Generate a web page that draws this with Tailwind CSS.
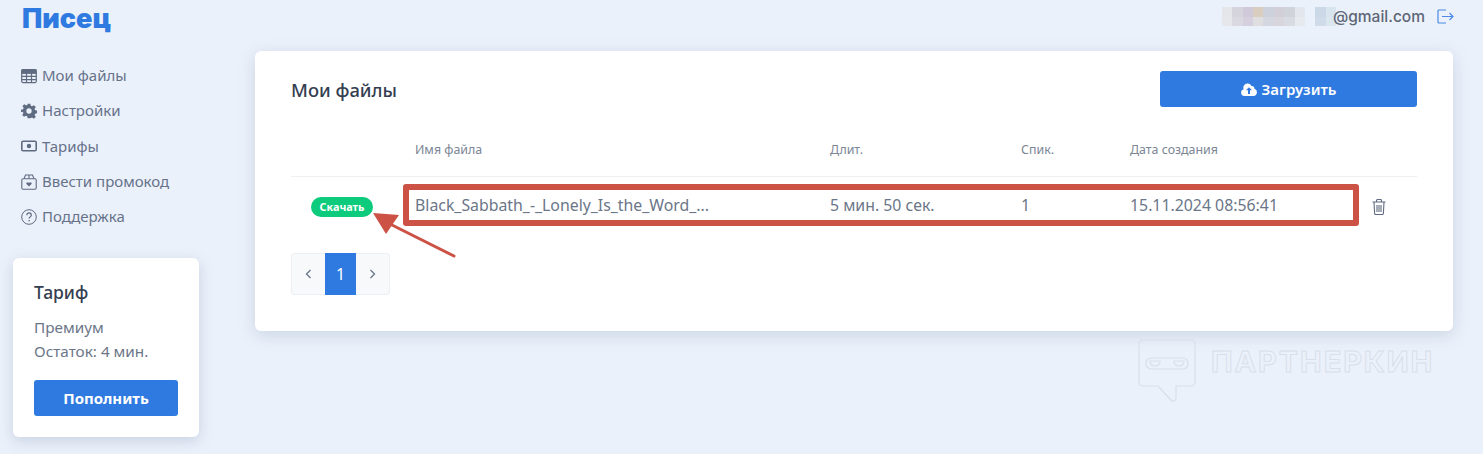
<!doctype html>
<html lang="ru">
<head>
  <meta charset="utf-8" />
  <title>Писец</title>
  <script src="https://cdn.jsdelivr.net/npm/@tailwindcss/browser@4"></script>
</head>
<body class="relative w-[1483px] h-[454px] overflow-hidden bg-[#ebf1fa] font-['Noto_Sans','Open_Sans',sans-serif] text-[#6b7688]">
  <div class="flex h-full">
    <!-- Sidebar -->
    <aside class="w-[255px] shrink-0">
      <div class="pl-[22px] h-[58px] text-[27px] leading-[38px] font-black text-[#2f7ae0] font-['Inter',sans-serif]">Писец</div>
      <nav class="pl-[21px] flex flex-col text-[15px] text-[#66728a]">
        <a class="h-[35px] flex items-center gap-[5px]">
          <svg class="w-4 h-4" viewBox="0 0 16 16" fill="none" stroke="#5f6b80" stroke-width="1.2"><rect x="0.7" y="1.7" width="14.6" height="13" rx="1.5"/><path d="M1 5.200h14M1 8.400h14M1 11.600h14M5.500 2v12.500M10.500 2v12.500"/><rect x="1" y="2" width="14" height="3" fill="#5f6b80"/></svg>
          Мои файлы
        </a>
        <a class="h-[35px] flex items-center gap-[5px]">
          <svg class="w-4 h-4" viewBox="0 0 24 24" fill="#5f6b80"><path fill-rule="evenodd" d="M10 1h4l.7 3.200 1.900.8 2.800-1.800 2.800 2.800-1.800 2.800.8 1.900 3.200.7v4l-3.200.7-.8 1.900 1.800 2.800-2.800 2.800-2.800-1.800-1.900.8L14 23h-4l-.7-3.200-1.900-.8-2.800 1.800-2.800-2.800 1.800-2.800-.8-1.900L0 14v-4l3.200-.7.8-1.900L2.200 4.600 5 1.800l2.800 1.800 1.900-.8zM12 8a4 4 0 1 0 0 8 4 4 0 0 0 0-8z"/></svg>
          Настройки
        </a>
        <a class="h-[36px] flex items-center gap-[5px]">
          <svg class="w-4 h-4" viewBox="0 0 16 16" fill="none"><rect x="0.8" y="3.300" width="14.400" height="9.400" rx="1.300" stroke="#5f6b80" stroke-width="1.600"/><circle cx="8" cy="8" r="2.200" fill="#5f6b80"/></svg>
          Тарифы
        </a>
        <a class="h-[35px] flex items-center gap-[5px]">
          <svg class="w-4 h-4" viewBox="0 0 16 16" fill="none" stroke="#5f6b80" stroke-width="1.100"><rect x="0.8" y="4.800" width="14.400" height="10.400" rx="1.200"/><path d="M3 4.800 4.500 1h7L13 4.800M8 1v3.800"/><path d="M8 12.500 5.500 10c-.9-1.300 1.500-2.400 2.500-1 1-1.400 3.400-.3 2.500 1z" fill="#5f6b80" stroke="none"/></svg>
          Ввести промокод
        </a>
        <a class="h-[35px] flex items-center gap-[5px]">
          <svg class="w-4 h-4" viewBox="0 0 16 16" fill="none" stroke="#5f6b80" stroke-width="1"><circle cx="8" cy="8" r="7.300"/><path d="M5.800 6.200c0-3 4.500-3 4.500 0 0 1.700-2.200 1.700-2.200 3.400" stroke-width="1.200"/><circle cx="8.100" cy="11.700" r=".8" fill="#5f6b80" stroke="none"/></svg>
          Поддержка
        </a>
      </nav>
      <div class="ml-[13px] mt-[24px] w-[186px] h-[179px] bg-white rounded-[6px] shadow-[0_4px_14px_rgba(110,130,170,0.28)] px-[21px] pt-[22px]">
        <div class="text-[17.5px] leading-[24px] font-medium text-[#343e50]">Тариф</div>
        <div class="mt-[11px] text-[15.3px] leading-[24px] text-[#6b7688]">Премиум<br>Остаток: 4 мин.</div>
        <button class="mt-[17px] w-[144px] h-9 rounded-[3px] bg-[#2f7ae0] text-white text-[15px] font-bold">Пополнить</button>
      </div>
    </aside>

    <!-- Main -->
    <div class="w-[1198px]">
      <header class="h-[51px] flex justify-end items-start pt-[7px] -mr-[30px] relative">
        <div class="flex items-center">
          <div class="w-[114px] h-[19px] grid grid-cols-[repeat(11,1fr)] grid-rows-2">
            <i class="bg-[#e4e6ea]"></i><i class="bg-[#d5d3dc]"></i><i class="bg-[#cfc9d9]"></i><i class="bg-[#d9cdc0]"></i><i class="bg-[#cdd1dc]"></i><i class="bg-[#d2cfd9]"></i><i class="bg-[#d0d3da]"></i><i class="bg-[#e3e6ec]"></i><i class="bg-[#ebf1fa]"></i><i class="bg-[#cbd8e8]"></i><i class="bg-[#d8e4ee]"></i>
            <i class="bg-[#e6e7ea]"></i><i class="bg-[#dad8e0]"></i><i class="bg-[#d6d0de]"></i><i class="bg-[#dfdfe0]"></i><i class="bg-[#d4d6e0]"></i><i class="bg-[#d8d5dc]"></i><i class="bg-[#d8dbe2]"></i><i class="bg-[#e6e9ee]"></i><i class="bg-[#ebf1fa]"></i><i class="bg-[#cfdbe9]"></i><i class="bg-[#dbe6ef]"></i>
          </div>
          <span class="-ml-[3px] text-[15.500px] leading-[19px] font-medium text-[#5d6675] font-['Inter',sans-serif]">@gmail.com</span>
          <svg class="w-[17px] h-[15px] ml-[12px] mr-[29px]" viewBox="0 0 17 15" fill="none" stroke="#4a8ae6" stroke-width="1.200"><path d="M9 1H2a1 1 0 0 0-1 1v11a1 1 0 0 0 1 1h7M5 7.500h11M12.500 4l3.500 3.500-3.500 3.500"/></svg>
        </div>
      </header>

      <main class="h-[280px] bg-white rounded-[6px] shadow-[0_4px_16px_rgba(110,130,170,0.26)] px-9 pt-5">
        <div class="flex items-center justify-between h-9">
          <h1 class="pt-[2px] text-[18.400px] font-medium text-[#343e50]">Мои файлы</h1>
          <button class="w-[257px] h-9 rounded-[3px] bg-[#2f7ae0] text-white text-[15px] font-semibold flex items-center justify-center gap-[5px]">
            <svg class="w-4 h-[13px]" viewBox="0 0 16 13" fill="#fff"><path fill-rule="evenodd" d="M3.600 13A3.400 3.400 0 0 1 2.700 6.300 4.200 4.200 0 0 1 10.500 3 2.700 2.700 0 0 1 13.400 5.800 3.700 3.700 0 0 1 12.500 13zM8 4.200 5 7.300h2V11h2V7.300h2z"/></svg>
            Загрузить
          </button>
        </div>

        <table class="mt-[23px] w-[1126px] table-fixed text-left">
          <colgroup><col class="w-[124px]"><col class="w-[415px]"><col class="w-[191px]"><col class="w-[109px]"><col class="w-[235px]"><col></colgroup>
          <thead class="text-[12.400px] text-[#7c8695]">
            <tr class="h-[46px] border-b border-[#eef0f3]">
              <th class="font-normal pb-[5px]"></th><th class="font-normal pb-[5px]">Имя файла</th><th class="font-normal pb-[5px]">Длит.</th><th class="font-normal pb-[5px]">Спик.</th><th class="font-normal pb-[5px]">Дата создания</th><th></th>
            </tr>
          </thead>
          <tbody class="text-[15.850px] text-[#6b7688]">
            <tr class="h-[57px]">
              <td class="pl-5"><span class="inline-block w-[62px] h-5 leading-5 text-center rounded-full bg-[#0ccb7c] text-white text-[10.800px] font-bold translate-y-[1px]">Скачать</span></td>
              <td class="pt-[2px]">Black_Sabbath_-_Lonely_Is_the_Word_...</td>
              <td class="pt-[2px]">5 мин. 50 сек.</td>
              <td class="pt-[2px]">1</td>
              <td class="pt-[2px]">15.11.2024 08:56:41</td>
              <td class="pl-[7px]">
                <svg class="w-[14px] h-4 translate-y-[2px]" viewBox="0 0 14 16" fill="none" stroke="#5f6b80" stroke-width="1.100"><path d="M.5 3h13M4.500 3V1.500a1 1 0 0 1 1-1h3a1 1 0 0 1 1 1V3M2 3l.6 11.300a1.200 1.200 0 0 0 1.200 1.200h6.400a1.200 1.200 0 0 0 1.200-1.200L12 3M5 6v7M7 6v7M9 6v7"/></svg>
              </td>
            </tr>
          </tbody>
        </table>

        <div class="mt-5 flex w-[99px] h-[42px] rounded-[3px] border border-[#eceff3] bg-[#f7f9fb] text-[#6b7688]">
          <span class="w-[33px] flex items-center justify-center">
            <svg class="w-[7px] h-[10px]" viewBox="0 0 7 10" fill="none" stroke="#6b7688" stroke-width="1.300"><path d="M5.500 1 1.500 5l4 4"/></svg>
          </span>
          <span class="w-[31px] -my-px flex items-center justify-center bg-[#2f7ae0] text-white text-[16px]">1</span>
          <span class="flex-1 flex items-center justify-center">
            <svg class="w-[7px] h-[10px]" viewBox="0 0 7 10" fill="none" stroke="#6b7688" stroke-width="1.300"><path d="M1.500 1l4 4-4 4"/></svg>
          </span>
        </div>
      </main>
    </div>
  </div>

  <!-- Red markup drawn over the screenshot -->
  <div class="absolute left-[403px] top-[184px] w-[956px] h-[42px] border-[6px] border-[#cb5245] rounded-[3px]"></div>
  <svg class="absolute left-[370px] top-[210px]" width="90" height="52" viewBox="0 0 90 52" fill="none">
    <path d="M84 46 20 14" stroke="#cb5245" stroke-width="3" stroke-linecap="round"/>
    <path d="M3 3 29 5 16 24z" fill="#cb5245"/>
  </svg>

  <!-- Watermark -->
  <div class="absolute left-[1138px] top-[339px] flex items-start">
    <svg width="58" height="64" viewBox="0 0 58 64" fill="none" stroke="#d9dfea" stroke-width="1.200">
      <path d="M5 1h48a4 4 0 0 1 4 4v38a4 4 0 0 1-4 4H38v12c0 3-3 4-5 2L20 47H5a4 4 0 0 1-4-4V5a4 4 0 0 1 4-4z"/>
      <rect x="8" y="19" width="42" height="11" rx="5"/>
      <path d="M12 22h10c0 3-2 5-5 5s-5-2-5-5zM36 22h10c0 3-2 5-5 5s-5-2-5-5z"/>
    </svg>
    <span class="ml-[15px] mt-[7px] text-[29px] leading-[32px] font-bold tracking-[1.900px] text-transparent font-['Inter',sans-serif] [-webkit-text-stroke:1px_#d9dfea]">ПАРТНЕРКИН</span>
  </div>
</body>
</html>
